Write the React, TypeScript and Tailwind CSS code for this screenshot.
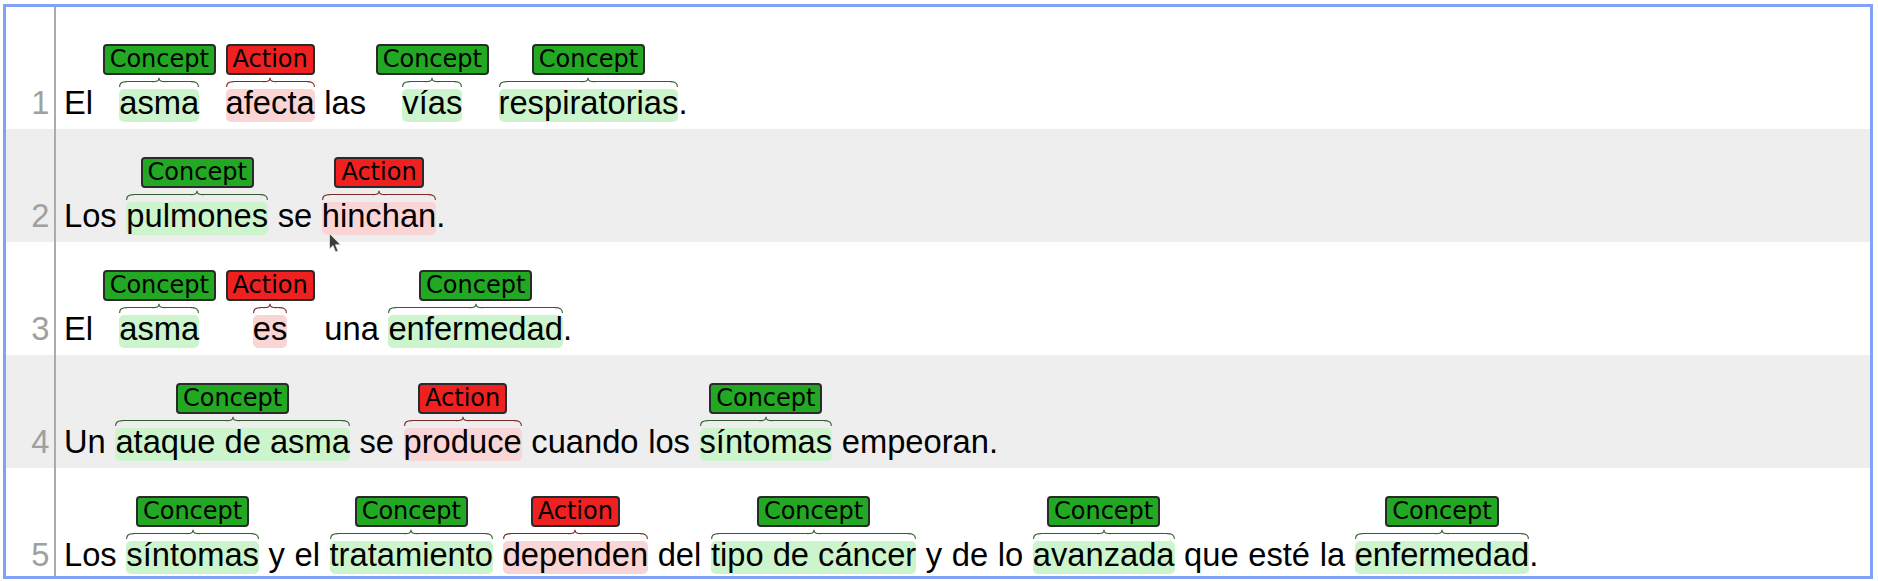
import React from 'react';

type Kind = 'Concept' | 'Action';

interface Token {
  text: string;
  kind?: Kind;
  punct?: string;
}

const c = (text: string, punct?: string): Token => ({ text, kind: 'Concept', punct });
const a = (text: string, punct?: string): Token => ({ text, kind: 'Action', punct });
const w = (text: string): Token => ({ text });

const sentences: Token[][] = [
  [w('El'), c('asma'), a('afecta'), w('las'), c('vías'), c('respiratorias', '.')],
  [w('Los'), c('pulmones'), w('se'), a('hinchan', '.')],
  [w('El'), c('asma'), a('es'), w('una'), c('enfermedad', '.')],
  [
    w('Un'), c('ataque de asma'), w('se'), a('produce'), w('cuando'), w('los'),
    c('síntomas'), w('empeoran.'),
  ],
  [
    w('Los'), c('síntomas'), w('y'), w('el'), c('tratamiento'), a('dependen'), w('del'),
    c('tipo de cáncer'), w('y'), w('de'), w('lo'), c('avanzada'), w('que'), w('esté'),
    w('la'), c('enfermedad', '.'),
  ],
];

const styles: Record<Kind, { box: string; hl: string; line: string; stroke: string }> = {
  Concept: {
    box: 'bg-[#22a822]',
    hl: 'bg-[#cdf5cd]',
    line: 'bg-[#325f32]',
    stroke: '#325f32',
  },
  Action: {
    box: 'bg-[#ee2020]',
    hl: 'bg-[#fad5d5]',
    line: 'bg-[#7c2a2a]',
    stroke: '#7c2a2a',
  },
};

function Brace({ kind }: { kind: Kind }) {
  const s = styles[kind];
  return (
    <div className="flex h-[10px] w-full items-start">
      <svg width="8" height="10" className="shrink-0">
        <path d="M0.6 10 C0.6 6.5 2 4.6 8 4.6" stroke={s.stroke} strokeWidth="1.1" fill="none" />
      </svg>
      <div className={`mt-[4px] h-[1.1px] flex-1 ${s.line}`} />
      <svg width="14" height="10" className="shrink-0">
        <path d="M0 4.6 C5 4.6 7 4 7 0.8 C7 4 9 4.6 14 4.6" stroke={s.stroke} strokeWidth="1.1" fill="none" />
      </svg>
      <div className={`mt-[4px] h-[1.1px] flex-1 ${s.line}`} />
      <svg width="8" height="10" className="shrink-0">
        <path d="M0 4.6 C6 4.6 7.4 6.5 7.4 10" stroke={s.stroke} strokeWidth="1.1" fill="none" />
      </svg>
    </div>
  );
}

function Chunk({ token }: { token: Token }) {
  if (!token.kind) {
    return <span className="block h-[33px] leading-[28.5px] whitespace-pre">{token.text}</span>;
  }
  const s = styles[token.kind];
  return (
    <div className="flex items-end">
      <div className="flex flex-col items-center">
        <div
          className={`h-[31px] rounded-[4px] border-2 border-[#2a2a2a] px-[5px] text-[24px] leading-[27px] text-black ${s.box}`}
          style={{ fontFamily: '"DejaVu Sans", sans-serif' }}
        >
          {token.kind}
        </div>
        <div className="mt-[2px] flex flex-col">
          <Brace kind={token.kind} />
          <span className={`mt-[2px] block h-[33px] rounded-[5px] leading-[28.5px] whitespace-pre ${s.hl}`}>
            {token.text}
          </span>
        </div>
      </div>
      {token.punct && <span className="block h-[33px] leading-[28.5px]">{token.punct}</span>}
    </div>
  );
}

export default function App() {
  return (
    <div
      className="relative h-[581px] w-[1878px] overflow-hidden bg-white pl-[3px] pt-[4px] text-[32.7px] text-black"
      style={{ fontFamily: '"Liberation Sans", Arial, sans-serif' }}
    >
      <div className="flex h-[575px] w-[1870px] flex-col overflow-hidden border-[3px] border-[#82a2f7]">
        {sentences.map((tokens, i) => (
          <div
            key={i}
            className={`flex shrink-0 ${i % 2 === 1 ? 'bg-[#eeeeee]' : 'bg-white'} ${i === 0 ? 'h-[122px]' : 'h-[113px]'}`}
          >
            <div className="flex w-[48px] shrink-0 items-end justify-end pb-[7px] pr-[4.5px] text-[#a0a0a0]">
              <span className="block h-[33px] leading-[28.5px]">{i + 1}</span>
            </div>
            <div className="flex flex-1 items-end gap-[9.6px] border-l-2 border-[#ababab] pb-[7px] pl-[8px]">
              {tokens.map((t, j) => (
                <Chunk key={j} token={t} />
              ))}
            </div>
          </div>
        ))}
      </div>

      {/* mouse pointer left in the shot */}
      <svg className="absolute left-[329px] top-[233px]" width="13" height="21" viewBox="0 0 13 21">
        <path d="M0.5 0.5 L0.5 16 L4 12.6 L6.6 19 L9 18 L6.5 11.8 L11.5 11.8 Z" fill="#3c3c3c" stroke="#e8e8e8" strokeWidth="0.8" />
      </svg>
    </div>
  );
}
